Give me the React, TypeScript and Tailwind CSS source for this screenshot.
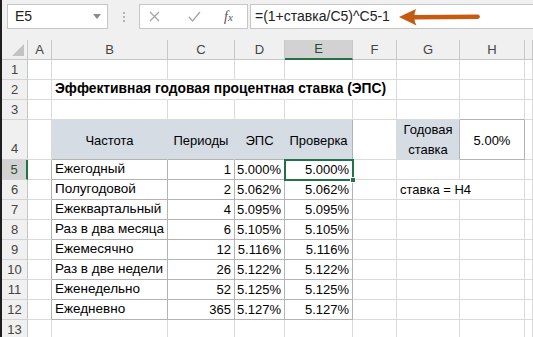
import React from 'react';

type Side = 'grid' | 'table' | 'fill' | 'none';

type CellSpec = {
  t?: React.ReactNode;
  cls?: string;
  r?: Side;
  b?: Side;
};

const RIGHT: Record<Side, string> = {
  grid: 'border-r-[#dadada]',
  table: 'border-r-[#b4b4b4]',
  fill: 'border-r-[#d6dce4]',
  none: 'border-r-transparent',
};

const BOTTOM: Record<Side, string> = {
  grid: 'border-b-[#dadada]',
  table: 'border-b-[#b4b4b4]',
  fill: 'border-b-[#d6dce4]',
  none: 'border-b-transparent',
};

const COLS = ['A', 'B', 'C', 'D', 'E', 'F', 'G', 'H', ''];

const data = [
  ['Ежегодный', '1', '5.000%', '5.000%'],
  ['Полугодовой', '2', '5.062%', '5.062%'],
  ['Ежеквартальный', '4', '5.095%', '5.095%'],
  ['Раз в два месяца', '6', '5.105%', '5.105%'],
  ['Ежемесячно', '12', '5.116%', '5.116%'],
  ['Раз в две недели', '26', '5.122%', '5.122%'],
  ['Еженедельно', '52', '5.125%', '5.125%'],
  ['Ежедневно', '365', '5.127%', '5.127%'],
];

function Cell({ spec, tall }: { spec: CellSpec; tall?: boolean }) {
  const r = RIGHT[spec.r ?? 'grid'];
  const b = BOTTOM[spec.b ?? 'grid'];
  return (
    <div
      className={`${tall ? 'h-10' : 'h-5'} border-r border-b ${r} ${b} flex items-center px-[3px] whitespace-nowrap ${spec.cls ?? ''}`}
    >
      {spec.t}
    </div>
  );
}

function RowHead({ n, tall, active }: { n: number; tall?: boolean; active?: boolean }) {
  return (
    <div
      className={`${tall ? 'h-10 items-end pb-[1px]' : 'h-5 items-center'} flex justify-center border-b border-b-[#d4d4d4] text-[13px] ${
        active
          ? 'bg-[#d2d2d2] border-r-2 border-r-[#217346] text-[#2e4a38]'
          : 'bg-[#f0f0f0] border-r border-r-[#c6c6c6] text-[#444]'
      }`}
    >
      {n}
    </div>
  );
}

function Row({ n, cells, tall, active }: { n: number; cells: CellSpec[]; tall?: boolean; active?: boolean }) {
  const full = COLS.map((_, i) => cells[i] ?? {});
  return (
    <>
      <RowHead n={n} tall={tall} active={active} />
      {full.map((c, i) => (
        <Cell key={i} spec={c} tall={tall} />
      ))}
    </>
  );
}

function FormulaBar() {
  return (
    <div className="h-10 bg-[#f0f0f0] flex items-start pt-[4px] text-[#222]">
      <div className="ml-[5px] w-[101px] h-[25px] bg-white border border-[#c6c6c6] flex items-center justify-between pl-[7px] pr-[6px] text-[14px]">
        <span>E5</span>
        <svg width="8" height="5" viewBox="0 0 8 5">
          <path d="M0 0 L8 0 L4 5 Z" fill="#8a8a8a" />
        </svg>
      </div>
      <div className="w-[31px] h-[25px] flex flex-col items-center justify-center gap-[2px]">
        <span className="w-[2px] h-[2px] bg-[#b4b4b4]" />
        <span className="w-[2px] h-[2px] bg-[#b4b4b4]" />
        <span className="w-[2px] h-[2px] bg-[#b4b4b4]" />
      </div>
      <div className="w-[109px] h-[25px] bg-white border border-[#c6c6c6] flex items-center pl-[8px]">
        <svg width="11" height="11" viewBox="0 0 11 11" className="ml-[1px]">
          <path d="M1 1 L10 10 M10 1 L1 10" stroke="#a6a6a6" strokeWidth="1.3" />
        </svg>
        <svg width="13" height="11" viewBox="0 0 13 11" className="ml-[28px]">
          <path d="M1 6 L4.5 10 L12 1" stroke="#a6a6a6" strokeWidth="1.3" fill="none" />
        </svg>
        <span className="ml-[23px] text-[14px] italic text-[#555]" style={{ fontFamily: '"Liberation Serif", serif' }}>
          f<span className="text-[11px]">x</span>
        </span>
      </div>
      <div className="relative flex-1 ml-[2px] h-[25px] bg-white border border-r-0 border-[#c6c6c6] flex items-center pl-[4px] text-[14px]">
        <span>=(1+ставка/C5)^C5-1</span>
        <svg className="absolute left-[147px] top-[1px]" width="86" height="22" viewBox="0 0 86 22">
          <path
            d="M1 11 L18 3 Q16.5 7 16.5 9 L80 8.6 Q84 10.5 80 13 L16.5 13.6 Q16.5 16 18.5 19.5 Z"
            fill="#c55a11"
          />
        </svg>
      </div>
    </div>
  );
}

export default function App() {
  const head = 'bg-[#d6dce4] justify-center';
  return (
    <div
      className="w-[533px] h-[337px] overflow-hidden bg-white border-l-2 border-l-[#1e1e1e] text-black"
      style={{ fontFamily: '"Liberation Sans", Arial, sans-serif' }}
    >
      <FormulaBar />
      <div className="relative grid grid-cols-[26px_24px_116px_67px_50px_68px_44px_63px_65px_1fr]">
        {/* column headers */}
        <div className="h-5 bg-[#f0f0f0] border-r border-b border-[#c6c6c6] flex items-end justify-end pr-[3px] pb-[3px]">
          <svg width="12" height="12" viewBox="0 0 12 12">
            <path d="M12 0 L12 12 L0 12 Z" fill="#c2c2c2" />
          </svg>
        </div>
        {COLS.map((c) =>
          c === 'E' ? (
            <div key={c} className="h-5 bg-[#d2d2d2] border-r border-r-[#c6c6c6] border-b-2 border-b-[#217346] flex items-center justify-center text-[13px] text-[#2e4a38]">
              {c}
            </div>
          ) : (
            <div key={c || 'I'} className="h-5 bg-[#f0f0f0] border-r border-b border-[#c6c6c6] flex items-center justify-center text-[13px] text-[#444]">
              {c}
            </div>
          )
        )}

        <Row n={1} cells={[]} />
        <Row
          n={2}
          cells={[
            {},
            { t: <span className="font-bold text-[13.8px]">Эффективная годовая процентная ставка (ЭПС)</span>, r: 'none', cls: 'overflow-visible' },
            { r: 'none' },
            { r: 'none' },
            { r: 'none' },
          ]}
        />
        <Row n={3} cells={[{}, {}, {}, {}, {}, {}, {}, { b: 'table' }]} />
        <Row
          n={4}
          tall
          cells={[
            {},
            { t: 'Частота', cls: head + ' text-[13px] pt-[3px]', r: 'fill', b: 'table' },
            { t: 'Периоды', cls: head + ' text-[13px] pt-[3px]', r: 'fill', b: 'table' },
            { t: 'ЭПС', cls: head + ' text-[13px] pt-[3px]', r: 'fill', b: 'table' },
            { t: 'Проверка', cls: head + ' text-[13px] pt-[3px]', r: 'table', b: 'table' },
            {},
            {
              t: (
                <span className="leading-[20px] text-center">
                  Годовая
                  <br />
                  ставка
                </span>
              ),
              cls: head + ' text-[13px]',
              r: 'table',
            },
            { t: '5.00%', cls: 'justify-center text-[13px] pt-[3px]', r: 'table', b: 'table' },
          ]}
        />
        {data.map(([name, p, eps, chk], i) => (
          <Row
            key={name}
            n={5 + i}
            active={i === 0}
            cells={[
              { r: 'table' },
              { t: name, cls: 'text-[13.5px]', r: 'table', b: 'table' },
              { t: p, cls: 'justify-end text-[13px]', r: 'table', b: 'table' },
              { t: eps, cls: 'justify-end text-[13px]', r: 'table', b: 'table' },
              { t: chk, cls: 'justify-end text-[13px]', r: 'table', b: 'table' },
              {},
              i === 1 ? { t: 'ставка = H4', cls: 'text-[13px] overflow-visible', r: 'none' } : {},
            ]}
          />
        ))}
        <Row n={13} cells={[]} />

        {/* active cell E5 */}
        <div className="absolute left-[282px] top-[119px] w-[70px] h-[22px] border-2 border-[#217346] pointer-events-none">
          <div className="absolute -right-[4px] -bottom-[4px] w-[6px] h-[6px] bg-[#217346] border border-white" />
        </div>
      </div>
    </div>
  );
}
